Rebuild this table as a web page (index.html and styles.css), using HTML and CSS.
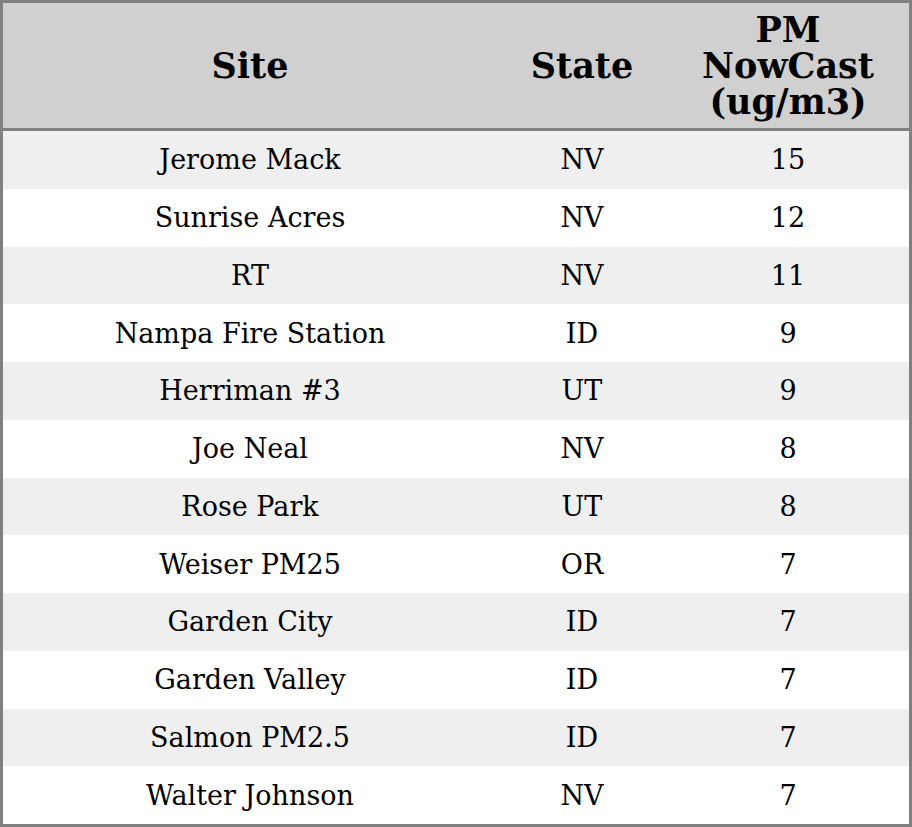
FILE: index.html
```html
<!DOCTYPE html>
<html>
<head>
<meta charset="utf-8">
<link rel="stylesheet" href="styles.css">
</head>
<body>
<table class="aq">
<colgroup><col class="c-site"><col class="c-state"><col class="c-pm"></colgroup>
<thead>
<tr><th>Site</th><th>State</th><th>PM NowCast (ug/m3)</th></tr>
</thead>
<tbody>
<tr><td>Jerome Mack</td><td>NV</td><td>15</td></tr>
<tr><td>Sunrise Acres</td><td>NV</td><td>12</td></tr>
<tr><td>RT</td><td>NV</td><td>11</td></tr>
<tr><td>Nampa Fire Station</td><td>ID</td><td>9</td></tr>
<tr><td>Herriman #3</td><td>UT</td><td>9</td></tr>
<tr><td>Joe Neal</td><td>NV</td><td>8</td></tr>
<tr><td>Rose Park</td><td>UT</td><td>8</td></tr>
<tr><td>Weiser PM25</td><td>OR</td><td>7</td></tr>
<tr><td>Garden City</td><td>ID</td><td>7</td></tr>
<tr><td>Garden Valley</td><td>ID</td><td>7</td></tr>
<tr><td>Salmon PM2.5</td><td>ID</td><td>7</td></tr>
<tr><td>Walter Johnson</td><td>NV</td><td>7</td></tr>
</tbody>
</table>
</body>
</html>
```
FILE: styles.css
```css
html, body { margin: 0; padding: 0; background: #fff; }
.aq {
  width: 912px;
  border-collapse: separate;
  border-spacing: 0;
  border: 3px solid #808080;
  font-family: "DejaVu Serif", serif;
  color: #000;
  table-layout: fixed;
}
.c-site { width: 494px; }
.c-state { width: 170px; }
.c-pm { width: 242px; }
.aq th {
  background: #d0d0d0;
  font-size: 35px;
  font-weight: bold;
  line-height: 36px;
  height: 128px;
  padding: 0 20px;
  text-align: center;
  vertical-align: middle;
  border-bottom: 3px solid #808080;
  box-sizing: border-box;
}
.aq td {
  font-size: 27px;
  height: 57.75px;
  padding: 0;
  text-align: center;
  vertical-align: middle;
}
.aq tbody tr:nth-child(odd) { background: #efefef; }
```
